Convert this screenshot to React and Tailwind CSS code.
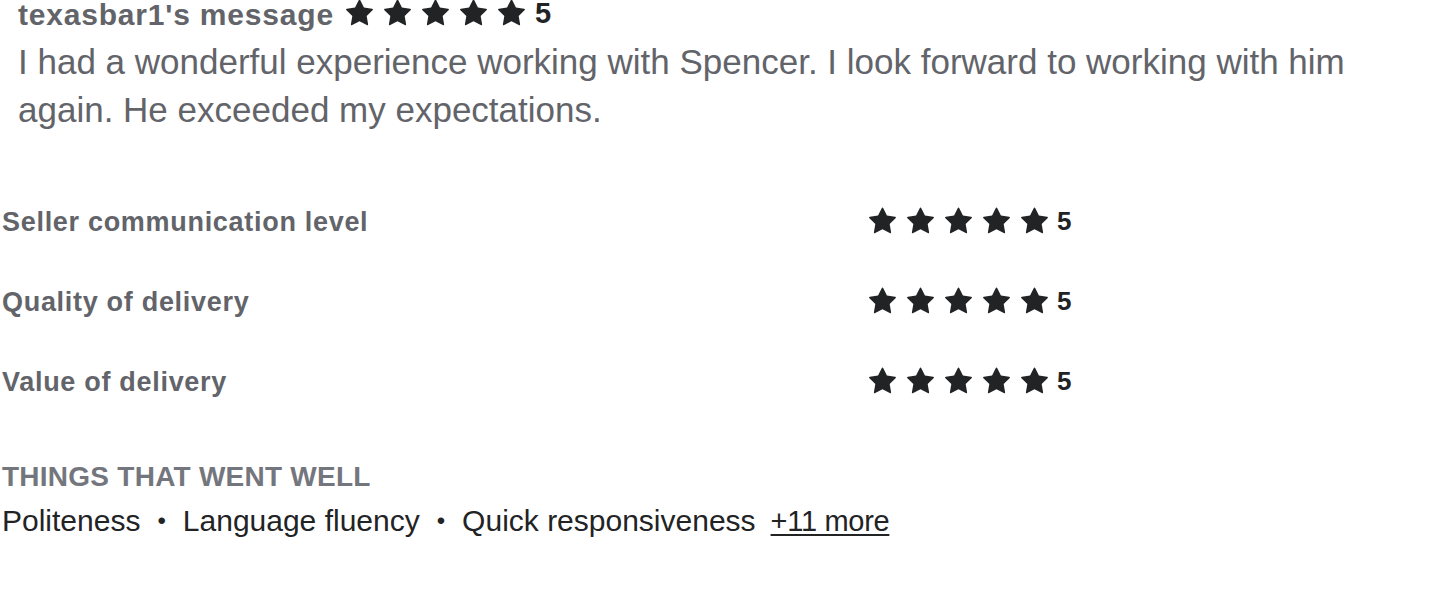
import React from "react";

const Star = ({ className = "" }) => (
  <svg viewBox="0 0 1792 1792" className={className} fill="currentColor" aria-hidden="true">
    <path d="M1728 647q0 22-26 48l-363 354 86 500q1 7 1 20 0 21-10.5 35.5t-30.5 14.5q-19 0-40-12l-449-236-449 236q-22 12-40 12-21 0-31.5-14.5t-10.5-35.5q0-6 2-20l86-500-364-354q-25-27-25-48 0-37 56-46l502-73 225-455q19-41 49-41t49 41l225 455 502 73q56 9 56 46z" />
  </svg>
);

const Stars = ({ score, big }) => (
  <div className="flex items-center text-[#222325]">
    <div className="flex items-center gap-[9px]">
      {[0, 1, 2, 3, 4].map((i) => (
        <Star key={i} className="w-[29px] h-[29px]" />
      ))}
    </div>
    <span className={big ? "ml-[9px] text-[29px] font-bold leading-none" : "ml-[8px] text-[26px] font-bold leading-none"}>
      {score}
    </span>
  </div>
);

const ratings = [
  { label: "Seller communication level", score: 5 },
  { label: "Quality of delivery", score: 5 },
  { label: "Value of delivery", score: 5 },
];

const highlights = ["Politeness", "Language fluency", "Quick responsiveness"];

export default function App() {
  return (
    <div className="w-[1430px] h-[592px] bg-white overflow-hidden font-['Liberation_Sans',Arial,sans-serif]">
      <div className="ml-[18px] flex items-center h-[30px]">
        <h3 className="text-[30px] leading-[30px] font-bold tracking-[0.8px] text-[#62646a]">texasbar1's message</h3>
        <div className="ml-[11px] -mt-[4px]">
          <Stars score={5} big />
        </div>
      </div>

      <p className="ml-[18px] mt-[8px] text-[35px] leading-[48px] text-[#62646a]">
        I had a wonderful experience working with Spencer. I look forward to working with him
        <br />
        again. He exceeded my expectations.
      </p>

      <div className="mt-[47px] ml-[2px]">
        {ratings.map((r) => (
          <div key={r.label} className="flex items-center h-[80px]">
            <span className="w-[866px] pt-[2px] text-[27px] font-bold tracking-[0.7px] text-[#62646a]">{r.label}</span>
            <Stars score={r.score} />
          </div>
        ))}
      </div>

      <div className="ml-[2px] mt-[36px]">
        <h4 className="text-[28px] leading-[40px] font-bold tracking-[0.25px] text-[#74767e] uppercase">Things that went well</h4>
        <div className="mt-[4px] flex items-center text-[30px] leading-[40px] text-[#222325]">
          {highlights.map((h, i) => (
            <React.Fragment key={h}>
              {i > 0 && <span className="mx-[17px] text-[24px]">•</span>}
              <span>{h}</span>
            </React.Fragment>
          ))}
          <span className="ml-[15px] text-[29px] tracking-[-0.3px] underline underline-offset-[3px]">+11 more</span>
        </div>
      </div>
    </div>
  );
}
